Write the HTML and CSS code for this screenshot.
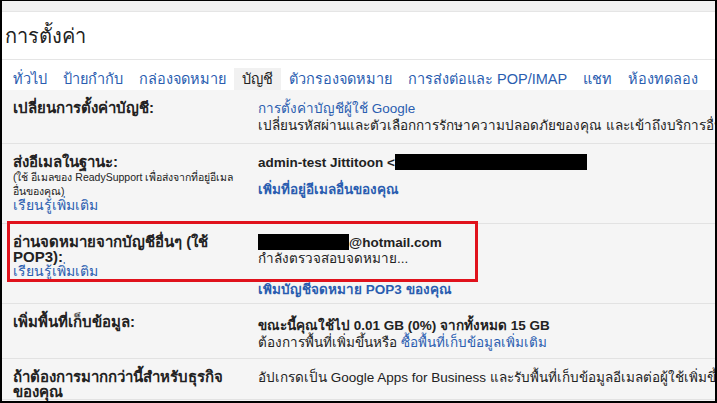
FILE: index.html
```html
<!DOCTYPE html>
<html lang="th">
<head>
    <meta charset="UTF-8">
    <title>การตั้งค่า</title>
    <link rel="stylesheet" href="styles.css">
</head>
<body>
    <div class="frame">
        <div class="topbar"></div>
        <div class="title">การตั้งค่า</div>
        <div class="tabs">
            <a class="tab">ทั่วไป</a>
            <a class="tab">ป้ายกำกับ</a>
            <a class="tab">กล่องจดหมาย</a>
            <a class="tab active">บัญชี</a>
            <a class="tab">ตัวกรองจดหมาย</a>
            <a class="tab">การส่งต่อและ POP/IMAP</a>
            <a class="tab">แชท</a>
            <a class="tab">ห้องทดลอง</a>
        </div>

        <div class="content">
            <div class="row row-account">
                <div class="label">เปลี่ยนการตั้งค่าบัญชี:</div>
                <div class="value">
                    <a class="link">การตั้งค่าบัญชีผู้ใช้ Google</a>
                    <div>เปลี่ยนรหัสผ่านและตัวเลือกการรักษาความปลอดภัยของคุณ และเข้าถึงบริการอื่นๆ ของ Google</div>
                </div>
            </div>

            <div class="row row-sendas">
                <div class="label">
                    ส่งอีเมลในฐานะ:
                    <div class="note">(ใช้ อีเมลของ ReadySupport เพื่อส่งจากที่อยู่อีเมลอื่นของคุณ)</div>
                    <a class="link plain">เรียนรู้เพิ่มเติม</a>
                </div>
                <div class="value">
                    <div class="strong">admin-test Jittitoon &lt;<span class="redact r1"></span></div>
                    <a class="link strong add">เพิ่มที่อยู่อีเมลอื่นของคุณ</a>
                </div>
            </div>

            <div class="row row-pop">
                <div class="label">
                    อ่านจดหมายจากบัญชีอื่นๆ (ใช้ POP3):
                    <a class="link plain">เรียนรู้เพิ่มเติม</a>
                </div>
                <div class="value">
                    <div class="strong"><span class="redact r2"></span>@hotmail.com</div>
                    <div>กำลังตรวจสอบจดหมาย...</div>
                    <a class="link strong add">เพิ่มบัญชีจดหมาย POP3 ของคุณ</a>
                </div>
            </div>

            <div class="row row-storage">
                <div class="label">เพิ่มพื้นที่เก็บข้อมูล:</div>
                <div class="value">
                    <div class="strong">ขณะนี้คุณใช้ไป 0.01 GB (0%) จากทั้งหมด 15 GB</div>
                    <div>ต้องการพื้นที่เพิ่มขึ้นหรือ <a class="link">ซื้อพื้นที่เก็บข้อมูลเพิ่มเติม</a></div>
                </div>
            </div>

            <div class="row row-business">
                <div class="label">ถ้าต้องการมากกว่านี้สำหรับธุรกิจของคุณ</div>
                <div class="value">
                    <div>อัปเกรดเป็น Google Apps for Business และรับพื้นที่เก็บข้อมูลอีเมลต่อผู้ใช้เพิ่มขึ้น</div>
                </div>
            </div>
        </div>

        <div class="highlight"></div>
    </div>
</body>
</html>
```

FILE: styles.css
```css
html, body {
    margin: 0;
    height: 100%;
    overflow: hidden;
}

body {
    font-family: 'Liberation Sans', Arial, sans-serif;
    font-size: 13px;
    color: #222;
    background: #fff;
}

.frame {
    position: relative;
    box-sizing: border-box;
    width: 717px;
    height: 403px;
    border: 2px solid #000;
    border-top-width: 1px;
    overflow: hidden;
}

.topbar {
    height: 10px;
    background: #f1f1f1;
    border-bottom: 1px solid #e5e5e5;
}

.title {
    height: 47px;
    display: flex;
    align-items: center;
    padding-left: 3px;
    font-size: 20px;
    color: #222;
    border-bottom: 1px solid #e5e5e5;
}

.tabs {
    display: flex;
    align-items: flex-end;
    height: 30px;
    padding-left: 3px;
    white-space: nowrap;
}

.tab {
    padding: 0 8px;
    height: 22px;
    line-height: 22px;
    color: #2a5db0;
    font-size: 14.5px;
}

.active {
    color: #222;
    background: #f1f1f1;
}

.content {
    background: #f5f5f5;
    height: 100%;
}

.row {
    display: flex;
    border-bottom: 1px solid #e2e2e2;
    padding: 10px 0 0 11px;
    white-space: nowrap;
}

.label {
    width: 230px;
    margin-right: 15px;
    flex-shrink: 0;
    font-weight: bold;
    font-size: 15px;
    white-space: normal;
    line-height: 15px;
}

.value {
    font-size: 13.5px;
    line-height: 17px;
}

.note {
    font-weight: normal;
    font-size: 10.5px;
    line-height: 14px;
    margin-top: 1px;
    width: 225px;
}

.link {
    color: #2a5db0;
    display: block;
}

.link.plain {
    font-weight: normal;
    font-size: 14px;
}

.value div .link {
    display: inline;
}

.strong {
    font-weight: bold;
}

.add {
    margin-top: 10px;
}

.redact {
    display: inline-block;
    background: #000;
    height: 16px;
    vertical-align: -3px;
}

.r1 {
    width: 192px;
}

.r2 {
    width: 91px;
}

.row-account {
    height: 43px;
}

.row-sendas {
    height: 69px;
}

.row-pop {
    height: 69px;
}

.row-pop .value {
    line-height: 16px;
}

.row-pop .add {
    margin-top: 15px;
}

.row-storage {
    height: 44px;
}

.row-storage .value {
    padding-top: 3px;
}

.highlight {
    position: absolute;
    left: 5px;
    top: 220px;
    width: 465px;
    height: 55px;
    border: 3px solid #e0121c;
}
```
